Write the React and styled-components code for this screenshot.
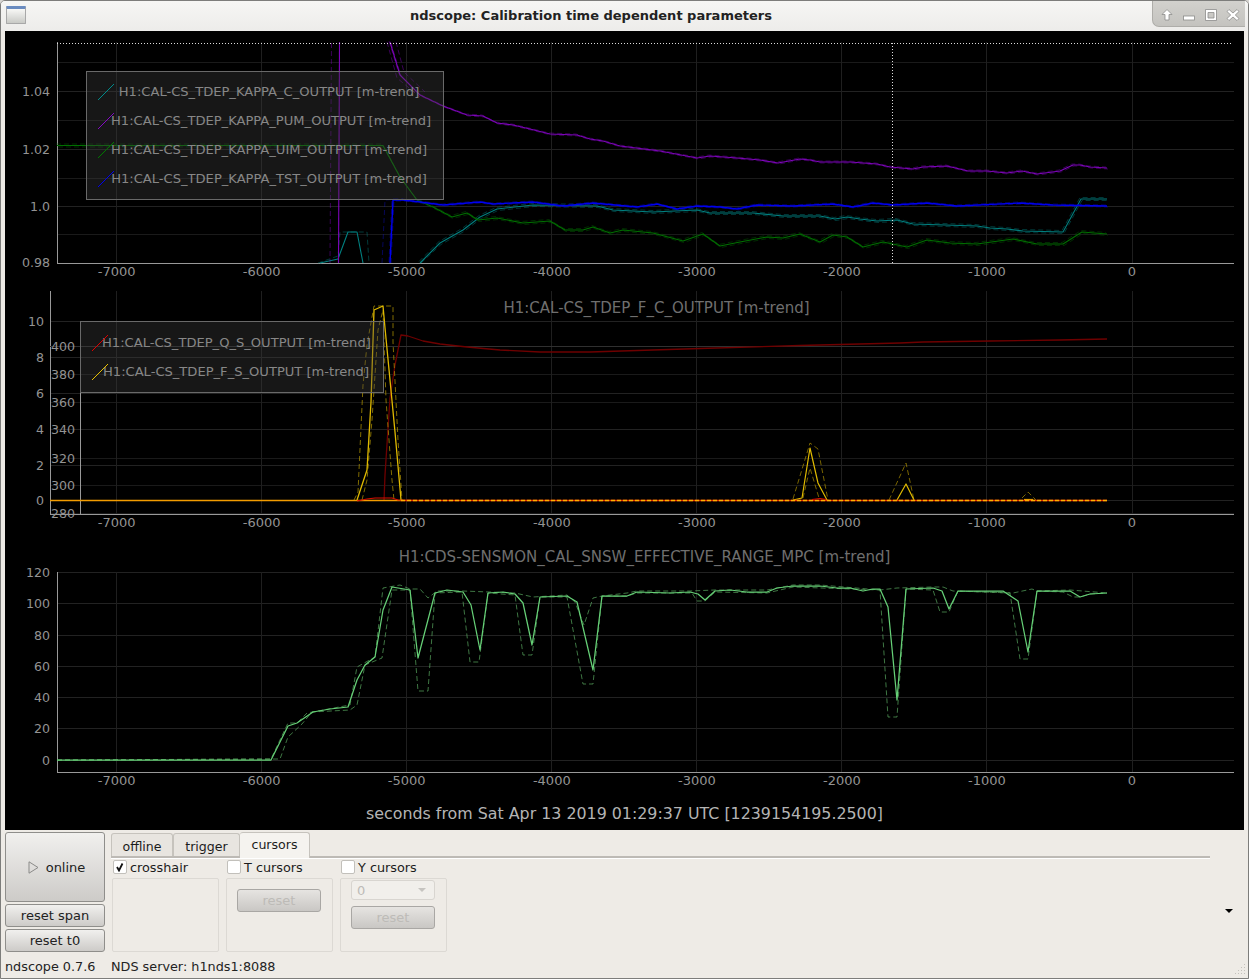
import styled, { createGlobalStyle } from 'styled-components'

const GlobalStyle = createGlobalStyle`
  html, body { margin: 0; padding: 0; background: #d8d6d2; }
  body { font-family: "DejaVu Sans", sans-serif; }
`

// all chart data is in window pixels, the svg viewBox does the shifting
const purple = '390,42 400,75 420,95 443,106 467,115 483,116 497,123 513,125 530,129 550,134 577,135 590,139 603,141 620,146 660,151 697,158 710,156 737,158 760,160 778,163 800,159 810,160 820,162 850,162 877,164 890,167 913,169 923,167 947,166 968,171 987,171 1007,173 1022,171 1037,174 1060,171 1073,165 1080,165 1090,167 1107,168'
const purpleDrop = '339.5,42 338.5,263'
const blue = '390,263 393,200 403,200 420,202 443,205 480,202 493,204 533,202 563,206 593,203 637,207 657,204 677,209 697,206 720,207 737,209 757,205 793,206 833,204 853,207 873,203 893,205 927,203 957,206 1020,203 1053,205 1107,206'
const green = '57,145.5 383,145.5 400,177 417,200 433,207 452,217 467,213 478,220 497,218 523,223 550,221 565,230 583,230 593,227 610,233 623,230 653,233 683,241 703,234 720,246 740,242 767,237 783,238 800,234 820,242 833,235 847,237 863,247 883,242 907,247 927,240 950,243 977,244 1013,239 1037,244 1063,244 1082,232 1107,234'
const teal = '420,263 440,243 463,230 480,217 497,209 533,205 597,206 613,210 653,212 697,210 710,213 753,213 783,216 820,216 835,219 847,217 860,219 877,221 897,220 913,224 977,226 990,228 1007,229 1023,231 1063,232 1081,199 1107,199'
const tealBump = '320,263 338,259 348,232 357,232 363,263'

const red = '384,501 385,475 390,398 395,365 401,335 408,336 423,341 440,344 467,347 500,350 540,352 590,352 700,348.5 800,345.5 900,343 923,342 990,341 1060,340 1107,339'
const redBase = '357,501 367,499 375,498 392,498 398,500 420,500.5'
const yellow = '357,500 367,470 371,402 374,310 383,306 385,328 395,432 401,500'
const yellowMax = '354,500 358,492 363,385 367,345 374,306 393,306 393,342 398,440 402,500'
const yellowMin = '362,500 367,480 372,420 378,330 383,310 386,400 392,480 394,500'
const peaks = [
  { main: '793,500 802,498 810,448 818,483 827,500', dashed: ['793,499 810,443 818,449 828,500', '803,498 810,468 819,498'] },
  { main: '897,500 906,484 914,500', dashed: ['889,500 906,463 914,500'] },
  { main: '1024,499.5 1033,499.5', dashed: ['1022,498 1028,492 1036,500'] },
]

const range = '57,760 271,760 288,726 297,723 313,712 330,709 348,707 357,680 365,665 375,657 383,610 392,587 410,590 418,658 435,593 447,590 463,592 471,605 480,650 488,593 503,592 515,594 523,603 532,645 540,597 567,596 577,602 593,670 602,596 627,596 637,592 670,593 690,592 698,594 705,600 715,591 730,590 747,592 767,592 777,588 793,586 820,586 837,588 850,588 863,591 873,589 880,589 888,607 897,700 906,589 933,588 942,591 949,609 958,591 1003,591 1018,601 1028,652 1037,591 1070,591 1080,597 1090,594 1107,593'
const rangeMin = '57,760 280,759 288,737 302,724 312,712 350,710 357,705 365,665 382,658 392,590 410,590 418,691 428,691 435,593 462,592 470,662 479,662 488,593 515,595 523,655 532,655 540,597 567,597 583,684 593,684 602,596 627,596 637,593 692,593 697,601 705,601 715,592 767,593 793,587 880,590 888,717 897,717 906,589 933,590 940,612 949,612 958,591 1010,593 1020,659 1028,659 1037,591 1063,592 1073,597 1080,597 1090,594 1107,593'
const rangeMax = '57,760 271,759 288,723 297,723 307,713 350,705 357,667 375,657 383,588 400,585 410,589 420,589 428,598 437,591 463,591 515,593 533,597 567,595 575,602 584,625 593,598 602,596 627,593 637,591 690,591 715,590 767,590 793,585 820,585 880,590 897,588 933,587 943,587 953,591 1013,593 1032,589 1037,591 1070,590 1107,593'

const shift = (pts, dx, dy) =>
  pts.split(' ').map(p => {
    const [x, y] = p.split(',').map(Number)
    return `${x + dx},${Math.min(y + dy, 263)}`
  }).join(' ')

const xTicks = [-7000, -6000, -5000, -4000, -3000, -2000, -1000, 0]
const xPos = t => 1132 + t * 0.14505

const PlotSvg = styled.svg`
  display: block;
  width: 1239px;
  height: ${p => p.$h}px;
`

const Tick = styled.text`
  font-family: "DejaVu Sans", sans-serif;
  font-size: ${p => p.$size || 13}px;
  fill: #939393;
`

const PlotTitle = styled.text`
  font-family: "DejaVu Sans", sans-serif;
  font-size: 15px;
  fill: #6f6f6f;
`

const Trace = styled.polyline`
  fill: none;
  stroke: ${p => p.$c};
  stroke-width: ${p => p.$w || 1.1};
  stroke-linejoin: round;
`

const Dashed = styled.polyline`
  fill: none;
  stroke: ${p => p.$c};
  stroke-width: 1;
  stroke-dasharray: 5 3;
  opacity: ${p => p.$o || 0.45};
`

const Line = styled.line`
  stroke: ${p => p.$c || '#1a1a1a'};
  stroke-width: 1;
  shape-rendering: crispEdges;
`

const MinMax = ({ pts, c, d = 1.5 }) => (
  <>
    <Dashed points={shift(pts, -1, -d)} $c={c} />
    <Dashed points={shift(pts, 1, d)} $c={c} />
  </>
)

const Axes = ({ left, top, bottom, yTicks, labelX, minor = [] }) => (
  <>
    {minor.map(y => <Line key={y} x1={left} x2={1234} y1={y} y2={y} />)}
    {yTicks.map(([, y]) => <Line key={y} x1={left} x2={1234} y1={y} y2={y} $c="#222" />)}
    {xTicks.map(t => <Line key={t} x1={xPos(t)} x2={xPos(t)} y1={top} y2={bottom} $c="#1f1f1f" />)}
    <Line x1={left} x2={left} y1={top} y2={bottom} $c="#999" />
    <Line x1={left} x2={1234} y1={bottom} y2={bottom} $c="#999" />
    {yTicks.map(([l, y]) => <Tick key={l} $size={12.6} x={labelX} y={y + 4} textAnchor="end">{l}</Tick>)}
    {xTicks.map(t => <Tick key={t} x={xPos(t)} y={bottom + 12.5} textAnchor="middle">{t}</Tick>)}
  </>
)

const KappaPlot = () => (
  <PlotSvg $h={254} viewBox="5 31 1239 254">
    <Axes left={57.5} top={42} bottom={263.5} labelX={50}
      yTicks={[['1.04', 91.5], ['1.02', 149.5], ['1.0', 206.5], ['0.98', 263]]}
      minor={[62.5, 120.5, 178.5, 234.5]} />
    <MinMax pts={teal} c="#007878" />
    <Dashed points="318,263 338,256 340,232 367,232 369,263" $c="#008080" />
    <Trace points={tealBump} $c="#008080" />
    <Trace points={teal} $c="#007f7f" />
    <MinMax pts={green} c="#006000" />
    <Trace points={green} $c="#006f00" />
    <Dashed points="382,263 385,200 403,199" $c="#1010c0" />
    <MinMax pts={blue} c="#0000d0" d={1} />
    <Trace points={blue} $c="#0000f0" $w={1.4} />
    <Dashed points="331.5,43 330,263" $c="#8000c0" />
    <Dashed points="387,42 397,78 420,97" $c="#8000c0" />
    <Dashed points="396,42 404,72 425,92" $c="#8000c0" />
    <MinMax pts={purple} c="#7000a8" d={1} />
    <Trace points={purple} $c="#7d05ba" />
    <Trace points={purpleDrop} $c="#7d05ba" />
    <Line x1={57} x2={1232} y1={43} y2={43} $c="#ddd" strokeDasharray="1 2" />
    <Line x1={892.5} x2={892.5} y1={43} y2={263} $c="#ddd" strokeDasharray="1 2" />
  </PlotSvg>
)

const FreqPlot = () => (
  <PlotSvg $h={250} viewBox="5 285 1239 250">
    <Axes left={50.5} top={291} bottom={514.5} labelX={44}
      yTicks={[['10', 321.5], ['8', 357.5], ['6', 393.5], ['4', 429.5], ['2', 465.5], ['0', 500.5]]}
      minor={[374.5, 402.5, 458.5, 485.5, 513.5]} />
    <Line x1={50} x2={1234} y1={346.5} y2={346.5} $c="#303030" />
    <PlotTitle x={656.5} y={313} textAnchor="middle">H1:CAL-CS_TDEP_F_C_OUTPUT [m-trend]</PlotTitle>
    <Line x1={80.5} x2={80.5} y1={391} y2={514} $c="#999" />
    {[['400', 346], ['380', 374], ['360', 402], ['340', 429], ['320', 458], ['300', 485], ['280', 513]].map(([l, y]) => (
      <Tick key={l} $size={12.6} x={75} y={y + 5} textAnchor="end">{l}</Tick>
    ))}
    <MinMax pts={red} c="#500000" d={1} />
    <Trace points={red} $c="#6e0000" $w={1.3} />
    <Dashed points={yellowMax} $c="#b89a00" $o={0.7} />
    <Dashed points={yellowMin} $c="#b89a00" $o={0.7} />
    <Trace points={yellow} $c="#e0ba00" $w={1.3} />
    {peaks.map(p => (
      <g key={p.main}>
        {p.dashed.map(d => <Dashed key={d} points={d} $c="#b89a00" $o={0.65} />)}
        <Trace points={p.main} $c="#e0ba00" $w={1.2} />
      </g>
    ))}
    <Trace points="50,500.5 401,500.5" $c="#f39c00" $w={1.4} />
    <Trace points={redBase} $c="#d81000" />
    <Trace points="401,500.5 1107,500.5" $c="#e83000" $w={1.4} />
    <Trace points="401,500.5 1107,500.5" $c="#ffb000" $w={1.4} strokeDasharray="4 2" />
    <Trace points="812,499.5 820,498.5 826,499.5" $c="#d81000" />
  </PlotSvg>
)

const RangePlot = () => (
  <PlotSvg $h={265} viewBox="5 535 1239 265">
    <Axes left={57.5} top={572} bottom={772.5} labelX={50}
      yTicks={[['120', 572.5], ['100', 603.5], ['80', 635.5], ['60', 666.5], ['40', 697.5], ['20', 728.5], ['0', 760.5]]} />
    <PlotTitle x={644.5} y={562} textAnchor="middle">H1:CDS-SENSMON_CAL_SNSW_EFFECTIVE_RANGE_MPC [m-trend]</PlotTitle>
    <Dashed points={rangeMin} $c="#58a860" $o={0.7} />
    <Dashed points={rangeMax} $c="#58a860" $o={0.7} />
    <Trace points={range} $c="#66d077" $w={1.25} />
  </PlotSvg>
)

const Window = styled.div`
  position: relative;
  box-sizing: border-box;
  width: 1249px;
  height: 979px;
  display: flex;
  flex-direction: column;
  background: #eeebe6;
  border: 1px solid #7d7d7b;
  border-radius: 5px 5px 0 0;
  overflow: hidden;
  color: #1c1c1c;
  font-size: 13px;
`

const TitleBar = styled.div`
  flex: none;
  height: 30px;
  display: flex;
  background: linear-gradient(#f6f6f4, #edecea);
`

const WindowIcon = styled.div`
  box-sizing: border-box;
  flex: none;
  width: 20px;
  height: 18px;
  margin: 5px 0 0 5px;
  border: 1px solid #a8a8a8;
  border-top: 3px solid #6a8cc0;
  border-radius: 1px;
  background: linear-gradient(#f8f8f6, #c9cac6);
`

const TitleText = styled.div`
  flex: 1;
  line-height: 30px;
  padding-left: 4px;
  text-align: center;
  font-weight: bold;
  font-size: 13px;
  color: #222;
`

const Controls = styled.div`
  flex: none;
  width: 93px;
  height: 26px;
  margin-right: 3px;
  display: flex;
  align-items: center;
  gap: 8px;
  padding: 2px 0 0 7px;
  box-sizing: border-box;
  background: linear-gradient(#d2d1cd, #c4c3bf);
  border: solid #aeada9;
  border-width: 0 0 1px 1px;
  border-radius: 0 0 0 7px;
`

const ControlIcon = styled.svg`
  flex: none;
  width: 14px;
  height: 14px;
  fill: #fff;
  stroke: #8c8c8a;
  stroke-width: 0.8;
`

const Main = styled.div`
  flex: none;
  height: 799px;
  margin: 0 4px;
  background: #000;
`

const PlotWrap = styled.div`
  position: relative;
`

const Legend = styled.div`
  position: absolute;
  left: ${p => p.$x}px;
  top: ${p => p.$y}px;
  box-sizing: border-box;
  width: ${p => p.$w}px;
  padding: ${p => p.$pt}px 0 6px;
  background: rgba(64, 64, 64, 0.36);
  border: 1px solid #696969;
`

const LegendRow = styled.div`
  position: relative;
  height: 29px;
  line-height: 29px;
  padding-left: ${p => p.$pad}px;
  padding-right: ${p => p.$pad2}px;
  text-align: center;
  white-space: nowrap;
  color: #878787;
  font-size: 13.09px;
`

const Swatch = styled.svg`
  position: absolute;
  left: 10px;
  top: 6px;
  width: 18px;
  height: 18px;
  stroke: ${p => p.$c};
  stroke-width: 1;
  fill: none;
`

const XLabel = styled.div`
  height: 30px;
  line-height: 28px;
  text-align: center;
  color: #b4b4b4;
  font-size: 15.85px;
`

const Panel = styled.div`
  flex: 1;
  display: flex;
  flex-direction: column;
  padding-left: 4px;
  min-height: 0;
`

const PanelTop = styled.div`
  flex: none;
  height: 122px;
  padding-top: 2px;
  display: flex;
`

const SideButtons = styled.div`
  flex: none;
  width: 100px;
  display: flex;
  flex-direction: column;
  gap: 2px;
`

const Button = styled.button`
  box-sizing: border-box;
  flex: none;
  width: 100%;
  height: ${p => p.$h || 23}px;
  padding: 0 0 0 ${p => p.$pl || 0}px;
  display: flex;
  align-items: center;
  justify-content: center;
  gap: 7px;
  font: 13px "DejaVu Sans", sans-serif;
  color: #222;
  background: linear-gradient(#f1f0ee, #cdcbc8);
  border: 1px solid #8f8e8b;
  border-radius: 3px;
`

const Tabs = styled.div`
  flex: none;
  width: 1099px;
  margin-left: 6px;
`

const TabBar = styled.div`
  height: 24px;
  display: flex;
  align-items: flex-end;
  border-bottom: 2px solid #bdbab5;
  box-shadow: 0 1px 0 #fff;
`

const Tab = styled.div`
  box-sizing: border-box;
  width: ${p => p.$w}px;
  height: ${p => (p.$active ? 26 : 23)}px;
  margin-bottom: ${p => (p.$active ? -2 : 0)}px;
  line-height: ${p => (p.$active ? 24 : 25)}px;
  font-size: 12.6px;
  text-align: center;
  background: ${p => (p.$active ? '#f5f3ef' : '#e8e5e0')};
  border: 1px solid #c6c3bd;
  border-bottom: none;
  border-left-width: ${p => (p.$active ? 0 : 1)}px;
  border-radius: 3px 3px 0 0;
`

const Groups = styled.div`
  display: flex;
  gap: 7px;
  margin-left: 1px;
`

const Group = styled.div`
  flex: none;
  width: 107px;
`

const CheckRow = styled.div`
  height: 18px;
  display: flex;
  align-items: center;
  gap: 3px;
  font-size: 12.8px;
`

const CheckBox = styled.div`
  box-sizing: border-box;
  width: 14px;
  height: 14px;
  margin-left: 1px;
  display: flex;
  align-items: center;
  justify-content: center;
  background: #fff;
  border: 1px solid #c2c0bb;
  border-radius: 2px;
`

const GroupBox = styled.div`
  box-sizing: border-box;
  height: 74px;
  margin-top: 2px;
  padding: ${p => p.$pt || 0}px 0 0 10px;
  display: flex;
  flex-direction: column;
  align-items: flex-start;
  gap: 6px;
  border: 1px solid #dcd9d4;
  border-radius: 2px;
`

const DisabledButton = styled.div`
  box-sizing: border-box;
  width: 84px;
  height: 23px;
  line-height: 21px;
  text-align: center;
  color: #bdbbb7;
  background: linear-gradient(#e6e4e1, #c9c7c4);
  border: 1px solid #a9a7a4;
  border-radius: 3px;
`

const Combo = styled.div`
  box-sizing: border-box;
  width: 84px;
  height: 20px;
  padding: 0 8px 0 5px;
  display: flex;
  align-items: center;
  justify-content: space-between;
  color: #bdbbb7;
  background: #f1efeb;
  border: 1px solid #d8d5d0;
  border-radius: 3px;
`

const ComboArrow = styled.div`
  width: 0;
  height: 0;
  border: 4px solid transparent;
  border-top: 4px solid #c6c4c0;
  border-bottom: none;
`

const MoreArrow = styled.div`
  width: 0;
  height: 0;
  margin: 77px 0 0 15px;
  border: 4px solid transparent;
  border-top: 4px solid #000;
  border-bottom: none;
`

const StatusBar = styled.div`
  flex: 1;
  display: flex;
  align-items: center;
  color: #222;
  font-size: 12.8px;
`

const StatusVersion = styled.span`
  flex: none;
  width: 106px;
`

const Grip = styled.svg`
  position: absolute;
  right: 2px;
  bottom: 2px;
  width: 12px;
  height: 12px;
  fill: #c4c1bc;
`

const swatchLine = <line x1="1" y1="17" x2="17" y2="1" />

const kappaRows = [
  ['#008b8b', 'H1:CAL-CS_TDEP_KAPPA_C_OUTPUT [m-trend]'],
  ['#8408c4', 'H1:CAL-CS_TDEP_KAPPA_PUM_OUTPUT [m-trend]'],
  ['#007a00', 'H1:CAL-CS_TDEP_KAPPA_UIM_OUTPUT [m-trend]'],
  ['#0000f0', 'H1:CAL-CS_TDEP_KAPPA_TST_OUTPUT [m-trend]'],
]

const freqRows = [
  ['#e00000', 'H1:CAL-CS_TDEP_Q_S_OUTPUT [m-trend]'],
  ['#e6c000', 'H1:CAL-CS_TDEP_F_S_OUTPUT [m-trend]'],
]

const LegendBox = ({ x, y, w, pt, pad, pad2, rows }) => (
  <Legend $x={x} $y={y} $w={w} $pt={pt}>
    {rows.map(([c, label]) => (
      <LegendRow key={label} $pad={pad} $pad2={pad2}>
        <Swatch $c={c} viewBox="0 0 18 18">{swatchLine}</Swatch>
        {label}
      </LegendRow>
    ))}
  </Legend>
)

export default function App() {
  return (
    <Window>
      <GlobalStyle />
      <TitleBar>
        <WindowIcon />
        <TitleText>ndscope: Calibration time dependent parameters</TitleText>
        <Controls>
          <ControlIcon viewBox="0 0 14 14"><path d="M7 1.5 12 6.5 9 6.5 9 12 5 12 5 6.5 2 6.5Z" /></ControlIcon>
          <ControlIcon viewBox="0 0 14 14"><rect x="1.5" y="8" width="11" height="4" /></ControlIcon>
          <ControlIcon viewBox="0 0 14 14"><path fillRule="evenodd" d="M1.5 1.5h11v11h-11Z M4 4.5v5.5h6V4.5Z" /></ControlIcon>
          <ControlIcon viewBox="0 0 14 14"><path d="M3 1.5 7 5 11 1.5 13 3.5 9.3 7 13 10.5 11 12.5 7 9 3 12.5 1 10.5 4.7 7 1 3.5Z" /></ControlIcon>
        </Controls>
      </TitleBar>

      <Main>
        <PlotWrap>
          <KappaPlot />
          <LegendBox x={81} y={40} w={358} pt={5} pad={24} pad2={16} rows={kappaRows} />
        </PlotWrap>
        <PlotWrap>
          <FreqPlot />
          <LegendBox x={75} y={36} w={304} pt={6} pad={21} pad2={13} rows={freqRows} />
        </PlotWrap>
        <RangePlot />
        <XLabel>seconds from Sat Apr 13 2019 01:29:37 UTC [1239154195.2500]</XLabel>
      </Main>

      <Panel>
        <PanelTop>
          <SideButtons>
            <Button $h={70} $pl={3}>
              <svg width="11" height="13" viewBox="0 0 11 13" fill="none" stroke="#8a8a88">
                <path d="M1 .8 10 6.5 1 12.2Z" />
              </svg>
              online
            </Button>
            <Button>reset span</Button>
            <Button>reset t0</Button>
          </SideButtons>
          <Tabs>
            <TabBar>
              <Tab $w={62}>offline</Tab>
              <Tab $w={67}>trigger</Tab>
              <Tab $w={70} $active>cursors</Tab>
            </TabBar>
            <Groups>
              <Group>
                <CheckRow>
                  <CheckBox>
                    <svg width="10" height="10" viewBox="0 0 10 10" fill="none" stroke="#111" strokeWidth="1.8">
                      <path d="M2 5 4 8.5 7.5 1.5" />
                    </svg>
                  </CheckBox>
                  crosshair
                </CheckRow>
                <GroupBox />
              </Group>
              <Group>
                <CheckRow><CheckBox />T cursors</CheckRow>
                <GroupBox $pt={10}><DisabledButton>reset</DisabledButton></GroupBox>
              </Group>
              <Group>
                <CheckRow><CheckBox />Y cursors</CheckRow>
                <GroupBox $pt={1}>
                  <Combo>0<ComboArrow /></Combo>
                  <DisabledButton>reset</DisabledButton>
                </GroupBox>
              </Group>
            </Groups>
          </Tabs>
          <MoreArrow />
        </PanelTop>
        <StatusBar>
          <StatusVersion>ndscope 0.7.6</StatusVersion>
          <span>NDS server: h1nds1:8088</span>
        </StatusBar>
      </Panel>
      <Grip viewBox="0 0 12 12">
        {[[10, 0], [10, 3], [7, 3], [10, 6], [7, 6], [4, 6], [10, 9], [7, 9], [4, 9], [1, 9]].map(([x, y]) => (
          <rect key={`${x}-${y}`} x={x} y={y} width="1" height="1" />
        ))}
      </Grip>
    </Window>
  )
}
